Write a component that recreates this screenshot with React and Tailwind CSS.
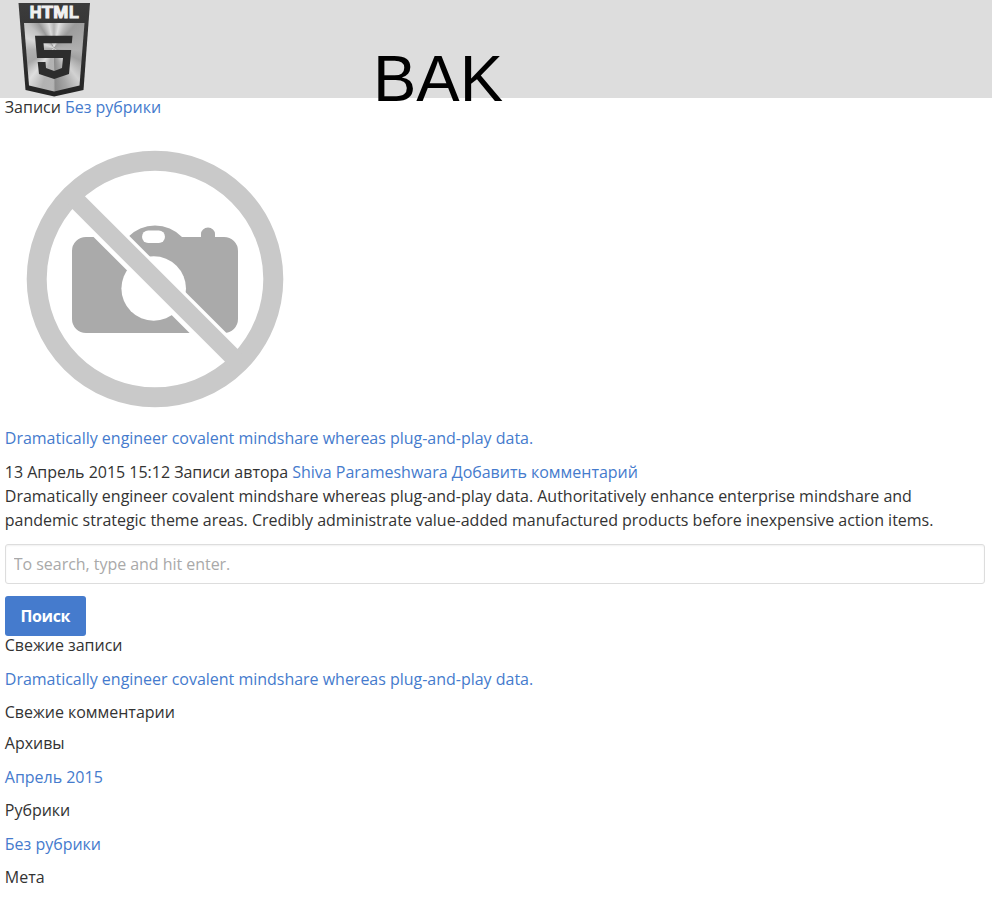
const LINK = "text-[#457bcd]";

function Html5Logo() {
  return (
    <svg className="block h-[98px] w-[75px]" viewBox="16 0 75 98" role="img" aria-label="HTML5">
      <defs>
        <linearGradient id="shell" x1="0" y1="0" x2="0" y2="1">
          <stop offset="0" stopColor="#3c3c3c" />
          <stop offset="1" stopColor="#252525" />
        </linearGradient>
        <clipPath id="plate">
          <path d="M24 23H84.500L79.500 85.500L54.200 91.500L29 85.500Z" />
        </clipPath>
      </defs>
      <path d="M18.500 3H90L83.500 90L54.200 96.500L25.500 90Z" fill="url(#shell)" />
      <g clipPath="url(#plate)">
        <foreignObject x="16" y="20" width="76" height="76">
          <div className="h-full w-full bg-[conic-gradient(from_0deg_at_38px_28px,#b4b4b4_0deg,#e2e2e2_12deg,#bcbcbc_26deg,#9c9c9c_42deg,#a6a6a6_68deg,#b0b0b0_95deg,#a0a0a0_115deg,#d2d2d2_142deg,#a6a6a6_162deg,#8c8c8c_178deg,#b4b4b4_181deg,#b2b2b2_197deg,#dedede_218deg,#a8a8a8_240deg,#b2b2b2_265deg,#d8d8d8_290deg,#c2c2c2_312deg,#9a9a9a_328deg,#dcdcdc_348deg,#b4b4b4_360deg)]" />
        </foreignObject>
      </g>
      <path d="M35 35.700H72.500L71.800 43.300H43.500L44.100 50H71.200L69 74L54.200 79L39 74L37.700 62H45.500L46 68L54.200 71L62 68L63 58H37Z" fill="#2d2d2d" />
      <g className="fill-[#f1f1f1] stroke-[#f1f1f1] font-['Liberation_Sans',sans-serif] text-[16px] font-bold" strokeWidth="1">
        <text x="29.700" y="17.500" textLength="11.800" lengthAdjust="spacingAndGlyphs">H</text>
        <text x="41.700" y="17.500" textLength="11.200" lengthAdjust="spacingAndGlyphs">T</text>
        <text x="53.200" y="17.500" textLength="15" lengthAdjust="spacingAndGlyphs">M</text>
        <text x="69" y="17.500" textLength="9.800" lengthAdjust="spacingAndGlyphs">L</text>
      </g>
    </svg>
  );
}

function NoPhoto() {
  return (
    <svg className="block h-[300px] w-[300px]" viewBox="5 129 300 300" role="img" aria-label="No photo">
      <path d="M86 237H128A37.500 37.500 0 0 1 182 237H201V234A7 6.500 0 0 1 215 234V237H224A14 14 0 0 1 238 251V319A14 14 0 0 1 224 333H86A14 14 0 0 1 72 319V251A14 14 0 0 1 86 237Z" fill="#aaa" />
      <rect x="142" y="230.500" width="23" height="12.500" rx="6.200" fill="#fff" />
      <circle cx="153.700" cy="288.500" r="32.300" fill="#fff" />
      <path d="M80 205L227 352" stroke="#fff" strokeWidth="26" />
      <circle cx="155" cy="279" r="118.300" fill="none" stroke="#c9c9c9" strokeWidth="20" />
      <path d="M74 198L236 360" stroke="#c9c9c9" strokeWidth="18" />
    </svg>
  );
}

function Heading({ children, tight = false }) {
  return <h4 className={tight ? "mb-[11px] leading-[19.2px]" : "mb-3 leading-[19.2px]"}>{children}</h4>;
}

function LinkRow({ children }) {
  return <p className="mb-3"><a className={LINK}>{children}</a></p>;
}

export default function App() {
  return (
    <div className="h-[905px] overflow-hidden bg-white font-['Open_Sans',sans-serif] text-base leading-6 tracking-[-0.017px] text-[#333]">
      <header className="flex h-[98px] bg-[#ddd] pl-4">
        <Html5Logo />
        <span className="ml-[282px] pt-[42px] font-['Liberation_Sans',Arial,sans-serif] text-[65px] leading-[73px] text-black">BAK</span>
      </header>
      <main className="pr-[7px] pl-[4.8px]">
        <h4 className="mb-3 leading-[19.2px]">Записи <a className={LINK}>Без рубрики</a></h4>
        <NoPhoto />
        <h4 className="mt-[-3px] mb-[10px]"><a className={LINK}>Dramatically engineer covalent mindshare whereas plug-and-play data.</a></h4>
        <p>13 Апрель 2015 15:12 Записи автора <a className={LINK}>Shiva Parameshwara</a> <a className={LINK}>Добавить комментарий</a></p>
        <p className="mb-3">Dramatically engineer covalent mindshare whereas plug-and-play data. Authoritatively enhance enterprise mindshare and pandemic strategic theme areas. Credibly administrate value-added manufactured products before inexpensive action items.</p>
        <input className="mb-3 block h-10 w-full rounded-[3px] border border-[#ddd] bg-white px-2 tracking-[-0.04px] shadow-[inset_0_1px_2px_rgba(0,0,0,0.06)] placeholder:text-[#a9a9a9]" placeholder="To search, type and hit enter." />
        <button className="block h-10 w-[81px] rounded-[3px] bg-[#457bcd] font-bold tracking-[-0.4px] text-white">Поиск</button>
        <Heading>Свежие записи</Heading>
        <LinkRow>Dramatically engineer covalent mindshare whereas plug-and-play data.</LinkRow>
        <Heading tight>Свежие комментарии</Heading>
        <Heading>Архивы</Heading>
        <LinkRow>Апрель 2015</LinkRow>
        <Heading>Рубрики</Heading>
        <LinkRow>Без рубрики</LinkRow>
        <Heading>Мета</Heading>
      </main>
    </div>
  );
}
